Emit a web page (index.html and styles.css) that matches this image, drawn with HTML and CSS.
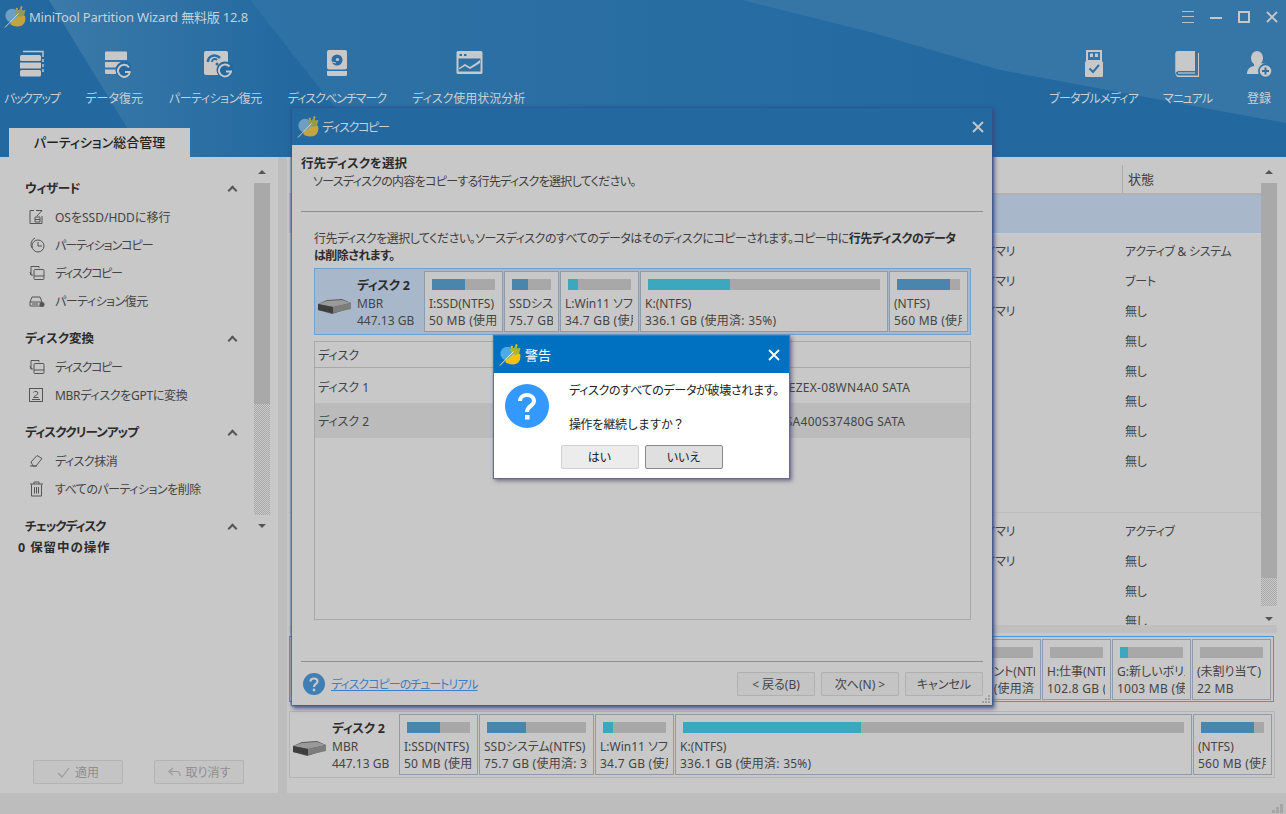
FILE: index.html
```html
<!DOCTYPE html>
<html lang="ja">
<head>
    <meta charset="utf-8">
    <title>MiniTool Partition Wizard</title>
    <link rel="stylesheet" href="styles.css">
</head>
<body>
<svg class="defs" width="0" height="0">
    <symbol id="logo" viewBox="0 0 24 24">
        <circle cx="9" cy="10.500" r="7.500" fill="var(--globe)"/>
        <path d="M7 18C11 15 15 13 17 8L23 11C24 15 23 19 20 21C16 23 11 23 7 20Z" fill="var(--gold)"/>
        <path d="M12 7L13.500 2L16 5L19 .5L20 5L23.500 4L22 10L18 12L14 10Z" fill="var(--leaf)"/>
        <circle cx="14" cy="3" r="1.200" fill="var(--gold)"/>
        <circle cx="19" cy="1.500" r="1.200" fill="var(--gold)"/>
        <path d="M1 23.500L16 8" stroke="var(--wand)" stroke-width="1" fill="none"/>
    </symbol>
    <symbol id="hdd" viewBox="0 0 33 15">
        <path d="M0 5 L9 1 L24 0 L33 4 L33 9 L14 15 L0 11 Z" fill="#5a5a5a"/>
        <path d="M0 5 L9 2 L24 1 L33 4 L15 8 Z" fill="#9a9a9a"/>
        <path d="M15 8 L33 4 L33 10 L15 14 Z" fill="#7d7d7d"/>
        <path d="M0 5 L15 8 L15 14 L0 11 Z" fill="#3e3e3e"/>
        <rect x="25" y="9" width="2" height="1.5" fill="#4f9a5a"/>
    </symbol>
    <symbol id="disk-copy" viewBox="0 0 16 16">
        <path d="M10 3 V1.5 H2 V10 H4 M2 10 L1 7" fill="none" stroke="currentColor"/>
        <rect x="5" y="4.5" width="10" height="10" rx="1" fill="none" stroke="currentColor"/>
        <path d="M5 11 H15" stroke="currentColor"/>
    </symbol>
</svg>

<div class="app">
    <header class="top">
        <svg class="bands" width="1286" height="157">
            <defs>
                <linearGradient id="shine" gradientUnits="userSpaceOnUse" x1="50" y1="0" x2="290" y2="0">
                    <stop offset="0" stop-color="#3b7aa9"/>
                    <stop offset="1" stop-color="#2369a0"/>
                </linearGradient>
                <linearGradient id="shine2" gradientUnits="userSpaceOnUse" x1="250" y1="0" x2="1000" y2="0">
                    <stop offset="0" stop-color="#2f72a5"/>
                    <stop offset="1" stop-color="#2369a0"/>
                </linearGradient>
            </defs>
            <polygon points="49,0 250,0 345,120 340,157 145,157" fill="url(#shine)"/>
            <polygon points="250,0 1000,0 1000,120 345,120" fill="url(#shine2)"/>
            <polygon points="742,0 1286,0 1286,123 1000,70 870,32" fill="#3676a7"/>
        </svg>
        <div class="title-row">
            <svg class="logo"><use href="#logo"/></svg>
            <span class="app-name">MiniTool Partition Wizard 無料版 12.8</span>
            <div class="win-btns">
                <svg width="12" height="12" viewBox="0 0 12 12"><path d="M0 .5H12M0 5.5H12M0 11.5H12" stroke="#b9c3cc"/></svg>
                <svg width="12" height="12" viewBox="0 0 12 12"><path d="M0 7H12" stroke="#c8c8c8" stroke-width="2"/></svg>
                <svg width="12" height="12" viewBox="0 0 12 12"><rect x="1" y="1" width="10" height="10" fill="none" stroke="#c8c8c8" stroke-width="2"/></svg>
                <svg width="12" height="12" viewBox="0 0 12 12"><path d="M1 1L11 11M11 1L1 11" stroke="#c8c8c8" stroke-width="1.800"/></svg>
            </div>
        </div>
        <div class="tools">
            <div class="tool-group">
                <div class="tool">
                    <svg width="29" height="28" viewBox="-2 0 29 28">
                        <rect x="1" y="5" width="21" height="6" rx="1.500" fill="#c8c8c8"/>
                        <rect x="1" y="12.500" width="21" height="6" rx=".5" fill="#c8c8c8"/>
                        <rect x="1" y="20" width="21" height="6.500" rx="1.500" fill="#c8c8c8"/>
                        <path d="M4 1.500H24V7M24 9V12M24 14V17M24 19V22" fill="none" stroke="#c8c8c8" stroke-width="1.400"/>
                    </svg>
                    <span class="sq13">バックアップ</span>
                </div>
                <div class="tool">
                    <svg width="33" height="28" viewBox="-6 0 33 28">
                        <path d="M2 1.500H22a1 1 0 0 1 1 1V10H1V2.500a1 1 0 0 1 1-1z" fill="#c8c8c8"/>
                        <rect x="1" y="12" width="22" height="5.500" fill="#c8c8c8"/>
                        <path d="M1 19.500H12V24H2a1 1 0 0 1-1-1z" fill="#c8c8c8"/>
                        <circle cx="20" cy="20" r="8.500" fill="#2369a0"/>
                        <path d="M25 17.500A6 6 0 1 0 26 21.500M21 22H26.500" fill="none" stroke="#c8c8c8" stroke-width="2"/>
                    </svg>
                    <span>データ復元</span>
                </div>
                <div class="tool">
                    <svg width="35" height="28" viewBox="-5 0 35 28">
                        <rect x="1" y="1" width="24" height="24" rx="2" fill="#c8c8c8"/>
                        <path d="M5 12C5 6 12 3 17 8" fill="none" stroke="#2b6da3" stroke-width="2.500"/>
                        <path d="M9 12C9 9 12 8 14 10" fill="none" stroke="#2b6da3" stroke-width="2"/>
                        <circle cx="14" cy="14" r="1.500" fill="#2b6da3"/>
                        <circle cx="22" cy="20" r="8.500" fill="#2369a0"/>
                        <path d="M26.500 16.500A6 6 0 1 0 28 21M23 21.500H29" fill="none" stroke="#c8c8c8" stroke-width="2"/>
                    </svg>
                    <span class="sq05">パーティション復元</span>
                </div>
                <div class="tool">
                    <svg width="22" height="28" viewBox="0 0 22 28">
                        <rect x="1" y="0" width="20" height="19.500" rx="2" fill="#c8c8c8"/>
                        <path d="M1 21H21V24.500a1.500 1.500 0 0 1-1.500 1.500H2.500A1.500 1.500 0 0 1 1 24.500z" fill="#c8c8c8"/>
                        <circle cx="11" cy="10" r="5.500" fill="#2b6da3"/>
                        <circle cx="11.500" cy="9.500" r="1.600" fill="#c8c8c8"/>
                        <path d="M6 12L10 13" stroke="#c8c8c8"/>
                    </svg>
                    <span class="sq1">ディスクベンチマーク</span>
                </div>
                <div class="tool">
                    <svg width="30" height="28" viewBox="-2 0 30 28">
                        <rect x="0.500" y="1" width="26" height="23" rx="1.500" fill="#c8c8c8"/>
                        <rect x="2.500" y="8.500" width="22" height="13" fill="#2d70a4"/>
                        <path d="M3 21V18L9 14L14 17L20 13L24 10V21Z" fill="#c8c8c8"/>
                        <path d="M3 19.500L9 16L14 19L20 15.500L24 13V21H3Z" fill="#2d70a4"/>
                        <rect x="3.500" y="4" width="2.500" height="2" fill="#2d70a4"/>
                        <rect x="8" y="4" width="2.500" height="2" fill="#2d70a4"/>
                    </svg>
                    <span>ディスク使用状況分析</span>
                </div>
            </div>
            <div class="tool-group tool-group-right">
                <div class="tool">
                    <svg width="20" height="28" viewBox="0 0 20 28">
                        <path d="M3 1H17V11H3z" fill="none" stroke="#c8c8c8" stroke-width="2"/>
                        <rect x="6" y="3.500" width="3" height="3.500" fill="#c8c8c8"/>
                        <rect x="11" y="3.500" width="3" height="3.500" fill="#c8c8c8"/>
                        <rect x="1" y="11" width="18" height="16" rx="1.500" fill="#c8c8c8"/>
                        <path d="M5.500 18.500L9 22L15 15" fill="none" stroke="#2f72a5" stroke-width="2"/>
                    </svg>
                    <span class="sq08">ブータブルメディア</span>
                </div>
                <div class="tool">
                    <svg width="24" height="28" viewBox="0 0 24 28">
                        <path d="M3 1H20V20H4C2 20 1 21.500 1 23C1 24.500 2 25.500 4 25.500H23V3H24V27H4C1.500 27 .5 25 .5 23V3.500C.5 2 1.500 1 3 1Z" fill="#c8c8c8"/>
                        <path d="M3 1H20V21H4C2 21 1 22 .5 23V3.500C.5 2 1.500 1 3 1Z" fill="#c8c8c8"/>
                        <path d="M3 23H20" stroke="#c8c8c8" stroke-width="1.200"/>
                    </svg>
                    <span class="sq1">マニュアル</span>
                </div>
                <div class="tool tool-last">
                    <svg width="26" height="28" viewBox="0 0 26 28">
                        <ellipse cx="11" cy="8" rx="6" ry="7" fill="#c8c8c8"/>
                        <path d="M8 13L8 16C3 17 1 20 1 24H14L20 14L14 13Z" fill="#c8c8c8"/>
                        <circle cx="19.500" cy="21" r="7.500" fill="#3575a6"/>
                        <circle cx="19.500" cy="21" r="5.800" fill="#c8c8c8"/>
                        <path d="M19.500 17.500V24.500M16 21H23" stroke="#2f72a5" stroke-width="2"/>
                    </svg>
                    <span>登録</span>
                </div>
            </div>
        </div>
        <div class="tab">パーティション総合管理</div>
    </header>

    <main class="main">
        <aside class="side">
            <div class="side-top">
                <nav class="nav">
                    <section class="group">
                        <h3 class="group-title"><span class="sq05">ウィザード</span><span class="chev"></span></h3>
                        <div class="item">
                            <svg width="14" height="14" viewBox="0 0 14 14"><path d="M5 .5H1V13.500H13V6M7 .5H13M13 .5L8 6" fill="none" stroke="currentColor"/><path d="M6 7H11V12H6zM6 9.500H11" fill="none" stroke="currentColor"/></svg>
                            <span>OSをSSD/HDDに移行</span>
                        </div>
                        <div class="item">
                            <svg width="16" height="16" viewBox="0 0 16 16"><circle cx="9" cy="9" r="6" fill="none" stroke="currentColor"/><path d="M9 5V9H13" fill="none" stroke="currentColor"/><path d="M3 11A7 7 0 0 1 6 1" fill="none" stroke="currentColor"/></svg>
                            <span class="sq1">パーティションコピー</span>
                        </div>
                        <div class="item">
                            <svg width="16" height="16"><use href="#disk-copy"/></svg>
                            <span class="sq13">ディスクコピー</span>
                        </div>
                        <div class="item">
                            <svg width="16" height="14" viewBox="0 0 16 14"><path d="M1 8L3 3H11L13 8M1 8H13V12H1Z" fill="none" stroke="currentColor"/><path d="M3 10H9" stroke="currentColor"/><circle cx="13" cy="10.500" r="2.500" fill="currentColor"/></svg>
                            <span class="sq05">パーティション復元</span>
                        </div>
                    </section>
                    <section class="group">
                        <h3 class="group-title"><span>ディスク変換</span><span class="chev"></span></h3>
                        <div class="item">
                            <svg width="16" height="16"><use href="#disk-copy"/></svg>
                            <span class="sq13">ディスクコピー</span>
                        </div>
                        <div class="item">
                            <svg width="14" height="14" viewBox="0 0 14 14"><rect x=".5" y=".5" width="13" height="13" fill="none" stroke="currentColor"/><path d="M4.500 4.500C5 3 9 3 9 5C9 7 5 8 4.500 9.500H9.500M3 11.500H11" fill="none" stroke="currentColor"/></svg>
                            <span class="sq03">MBRディスクをGPTに変換</span>
                        </div>
                    </section>
                    <section class="group">
                        <h3 class="group-title"><span class="sq08">ディスククリーンアップ</span><span class="chev"></span></h3>
                        <div class="item">
                            <svg width="15" height="14" viewBox="0 0 15 14"><path d="M1 12H8M2 8L8 1.500L13 4.500L7 12H4Z" fill="none" stroke="currentColor"/></svg>
                            <span class="sq05">ディスク抹消</span>
                        </div>
                        <div class="item">
                            <svg width="15" height="16" viewBox="0 0 15 16"><path d="M1 3H14M5 3V1H10V3M2.500 3.500V15H12.500V3.500M5.500 6V12.500M7.500 6V12.500M9.500 6V12.500" fill="none" stroke="currentColor"/></svg>
                            <span class="sq05">すべてのパーティションを削除</span>
                        </div>
                    </section>
                    <section class="group">
                        <h3 class="group-title"><span class="sq1">チェックディスク</span><span class="chev"></span></h3>
                    </section>
                    <div class="pending">0 保留中の操作</div>
                </nav>
                <div class="vscroll vscroll-side">
                    <span class="arrow-up"></span>
                    <div class="thumb"></div>
                    <div class="dither"></div>
                    <span class="arrow-down"></span>
                </div>
            </div>
            <div class="actions">
                <button class="act-btn"><svg width="13" height="11" viewBox="0 0 13 11"><path d="M1 6L5 10L12 1" fill="none" stroke="#9b9b9b" stroke-width="1.200"/></svg>適用</button>
                <button class="act-btn"><svg width="13" height="11" viewBox="0 0 13 11"><path d="M5 1L1 4.500L5 8M1 4.500H9C11 4.500 12 6 12 9" fill="none" stroke="#9b9b9b" stroke-width="1.200"/></svg>取り消す</button>
            </div>
        </aside>

        <section class="content">
            <div class="table-wrap">
                <div class="parts-table">
                    <div class="head-row"><span class="head-status">状態</span></div>
                    <div class="sel-row"></div>
                    <div class="prow"><span>プライマリ</span><span>アクティブ &amp; システム</span></div>
                    <div class="prow"><span>プライマリ</span><span>ブート</span></div>
                    <div class="prow"><span>プライマリ</span><span>無し</span></div>
                    <div class="prow"><span></span><span>無し</span></div>
                    <div class="prow"><span></span><span>無し</span></div>
                    <div class="prow"><span></span><span>無し</span></div>
                    <div class="prow"><span></span><span>無し</span></div>
                    <div class="prow"><span></span><span>無し</span></div>
                    <div class="disk-gap"></div>
                    <div class="prow"><span>プライマリ</span><span>アクティブ</span></div>
                    <div class="prow"><span>プライマリ</span><span>無し</span></div>
                    <div class="prow"><span></span><span>無し</span></div>
                    <div class="prow"><span></span><span>無し</span></div>
                </div>
                <div class="vscroll vscroll-table">
                    <span class="arrow-up"></span>
                    <div class="thumb"></div>
                    <div class="dither"></div>
                    <span class="arrow-down"></span>
                </div>
            </div>
            <div class="hscroll"></div>

            <div class="disk disk-selected">
                <div class="parts">
                    <div class="part part-e">
                        <div class="bar"></div>
                        <div class="part-text"><div>E:新規マウント(NTFS)</div><div>465.8 GB (使用済: 0%)</div></div>
                    </div>
                    <div class="part part-h">
                        <div class="bar"></div>
                        <div class="part-text"><div>H:仕事(NTFS)</div><div>102.8 GB (使用済: 0%)</div></div>
                    </div>
                    <div class="part part-g">
                        <div class="bar"><i class="teal" style="width:12%"></i></div>
                        <div class="part-text"><div>G:新しいボリューム</div><div>1003 MB (使用済: 12%)</div></div>
                    </div>
                    <div class="part part-g">
                        <div class="bar"></div>
                        <div class="part-text"><div>(未割り当て)</div><div>22 MB</div></div>
                    </div>
                </div>
            </div>

            <div class="disk disk-lower">
                <svg class="hdd" width="33" height="15"><use href="#hdd"/></svg>
                <div class="disk-info">
                    <b>ディスク 2</b>
                    <div>MBR</div>
                    <div>447.13 GB</div>
                </div>
                <div class="parts">
                    <div class="part w79">
                        <div class="bar"><i style="width:52%"></i></div>
                        <div class="part-text"><div>I:SSD(NTFS)</div><div>50 MB (使用済: 52%)</div></div>
                    </div>
                    <div class="part w115">
                        <div class="bar"><i style="width:39%"></i></div>
                        <div class="part-text"><div>SSDシステム(NTFS)</div><div>75.7 GB (使用済: 39%)</div></div>
                    </div>
                    <div class="part w79">
                        <div class="bar"><i class="teal" style="width:16%"></i></div>
                        <div class="part-text"><div>L:Win11 ソフト(NTFS)</div><div>34.7 GB (使用済: 16%)</div></div>
                    </div>
                    <div class="part w517">
                        <div class="bar"><i class="teal" style="width:35.500%"></i></div>
                        <div class="part-text"><div>K:(NTFS)</div><div>336.1 GB (使用済: 35%)</div></div>
                    </div>
                    <div class="part w79">
                        <div class="bar"><i style="width:84%"></i></div>
                        <div class="part-text"><div>(NTFS)</div><div>560 MB (使用済: 84%)</div></div>
                    </div>
                </div>
            </div>
        </section>
    </main>

    <footer class="status">
        <svg width="11" height="9" viewBox="0 0 11 9"><path d="M8 0h3v3H8zM4 3h3v3H4zM8 3h3v3H8zM0 6h3v3H0zM4 6h3v3H4zM8 6h3v3H8z" fill="#a5a5a5"/></svg>
    </footer>

    <!-- main dialog -->
    <div class="dialog copy-dialog">
        <div class="dlg-title">
            <svg class="logo"><use href="#logo"/></svg>
            <span class="sq13">ディスクコピー</span>
            <svg class="dlg-x" width="12" height="12" viewBox="0 0 12 12"><path d="M1 1L11 11M11 1L1 11" stroke="#c8c8c8" stroke-width="1.800"/></svg>
        </div>
        <div class="dlg-body">
            <h4 class="dlg-heading">行先ディスクを選択</h4>
            <p class="dlg-sub">ソースディスクの内容をコピーする行先ディスクを選択してください。</p>
            <hr class="rule rule-top">
            <div class="dlg-inner">
                <p class="dlg-para">行先ディスクを選択してください。ソースディスクのすべてのデータはそのディスクにコピーされます。コピー中に<b>行先ディスクのデータ<br>は削除されます。</b></p>
                <div class="disk disk-target">
                    <svg class="hdd" width="33" height="15"><use href="#hdd"/></svg>
                    <div class="disk-info">
                        <b>ディスク 2</b>
                        <div>MBR</div>
                        <div>447.13 GB</div>
                    </div>
                    <div class="parts">
                        <div class="part w79">
                            <div class="bar"><i style="width:52%"></i></div>
                            <div class="part-text"><div>I:SSD(NTFS)</div><div>50 MB (使用済: 52%)</div></div>
                        </div>
                        <div class="part w55">
                            <div class="bar"><i style="width:41%"></i></div>
                            <div class="part-text"><div>SSDシステム(NTFS)</div><div>75.7 GB (使用済: 41%)</div></div>
                        </div>
                        <div class="part w79">
                            <div class="bar"><i class="teal" style="width:16%"></i></div>
                            <div class="part-text"><div>L:Win11 ソフト(NTFS)</div><div>34.7 GB (使用済: 16%)</div></div>
                        </div>
                        <div class="part w248">
                            <div class="bar"><i class="teal" style="width:35.500%"></i></div>
                            <div class="part-text"><div>K:(NTFS)</div><div>336.1 GB (使用済: 35%)</div></div>
                        </div>
                        <div class="part w79">
                            <div class="bar"><i style="width:84%"></i></div>
                            <div class="part-text"><div>(NTFS)</div><div>560 MB (使用済: 84%)</div></div>
                        </div>
                    </div>
                </div>
                <div class="disk-table">
                    <div class="dt-head">ディスク</div>
                    <div class="dt-row"><span>ディスク 1</span><span class="dt-model">WDC WD10EZEX-08WN4A0 SATA</span></div>
                    <div class="dt-row dt-row-sel"><span>ディスク 2</span><span class="dt-model">KINGSTON SA400S37480G SATA</span></div>
                </div>
            </div>
            <hr class="rule rule-bottom">
            <div class="dlg-foot">
                <svg width="22" height="22" viewBox="0 0 22 22"><circle cx="11" cy="11" r="11" fill="#3f7fb5"/><path d="M7.500 8.500C7.500 4.500 14.500 4.500 14.500 8.500C14.500 11 11 11 11 14" fill="none" stroke="#c8c8c8" stroke-width="2.200"/><circle cx="11" cy="17" r="1.400" fill="#c8c8c8"/></svg>
                <a class="help-link">ディスクコピーのチュートリアル</a>
                <div class="dlg-btns">
                    <button class="dlg-btn">&lt; 戻る(B)</button>
                    <button class="dlg-btn">次へ(N) &gt;</button>
                    <button class="dlg-btn">キャンセル</button>
                </div>
            </div>
        </div>
        <svg class="grip" width="9" height="9" viewBox="0 0 9 9"><path d="M6 0h2v2H6zM3 3h2v2H3zM6 3h2v2H6zM0 6h2v2H0zM3 6h2v2H3zM6 6h2v2H6z" fill="#a0a0a0"/></svg>
    </div>

    <!-- warning on top of it -->
    <div class="dialog alert">
        <div class="alert-title">
            <svg class="logo logo-bright"><use href="#logo"/></svg>
            <span>警告</span>
            <svg class="dlg-x" width="12" height="12" viewBox="0 0 12 12"><path d="M1 1L11 11M11 1L1 11" stroke="#fff" stroke-width="1.800"/></svg>
        </div>
        <div class="alert-body">
            <svg class="alert-q" width="44" height="44" viewBox="0 0 44 44"><circle cx="22" cy="22" r="22" fill="#3399ff"/><path d="M15 17C15 9 29 9 29 17C29 22 22 22 22 28" fill="none" stroke="#fff" stroke-width="4"/><rect x="20" y="31" width="4.500" height="4.500" fill="#fff"/></svg>
            <div class="alert-msg">
                <p>ディスクのすべてのデータが破壊されます。</p>
                <p class="alert-ask">操作を継続しますか？</p>
            </div>
        </div>
        <div class="alert-btns">
            <button class="alert-btn">はい</button>
            <button class="alert-btn alert-btn-focus">いいえ</button>
        </div>
    </div>
</div>
</body>
</html>
```

FILE: styles.css
```css
* {
    box-sizing: border-box;
}
html, body {
    margin: 0;
    height: 100%;
    overflow: hidden;
}
body {
    font-family: "Noto Sans", "Noto Sans CJK JP", sans-serif;
    font-size: 12px;
    font-feature-settings: "palt";
    color: #3e3e3e;
    background: #c8c8c8;
}
p, h3, h4 {
    margin: 0;
}
.defs {
    position: absolute;
}
.sq03 { letter-spacing: -0.3px; }
.sq05 { letter-spacing: -0.5px; }
.sq08 { letter-spacing: -0.8px; }
.sq1 { letter-spacing: -1px; }
.sq13 { letter-spacing: -1.3px; }

.app {
    position: relative;
    width: 1286px;
    height: 814px;
    display: flex;
    flex-direction: column;
    overflow: hidden;
    --gold: #c4a440;
    --globe: #6c9fc2;
    --wand: #dcd8c6;
    --leaf: #8f9c52;
}

/* top blue area */
.top {
    position: relative;
    height: 157px;
    flex: none;
    background: #2369a0;
    color: #c8d0d6;
}
.bands {
    position: absolute;
    left: 0;
    top: 0;
}
.title-row {
    position: relative;
    display: flex;
    align-items: center;
    height: 33px;
    padding-left: 4px;
}
.logo {
    width: 22px;
    height: 22px;
    flex: none;
}
.logo-bright {
    --gold: #f2c40f;
    --globe: #49ace8;
    --wand: #fff6d0;
    --leaf: #a5b63c;
}
.app-name {
    margin-left: 3px;
    font-size: 13px;
    letter-spacing: -0.17px;
}
.win-btns {
    display: flex;
    gap: 16px;
    margin-left: auto;
    padding-right: 8px;
}
.tools {
    position: relative;
    display: flex;
    justify-content: space-between;
    margin-top: 17px;
    padding-left: 4px;
    padding-right: 14px;
}
.tool-group {
    display: flex;
    gap: 26px;
}
.tool-group-right {
    gap: 25px;
}
.tool {
    display: flex;
    flex-direction: column;
    align-items: center;
}
.tool-last {
    margin-left: 9px;
}
.tool span {
    margin-top: 12px;
    line-height: 18px;
    white-space: nowrap;
}
.tab {
    position: absolute;
    left: 9px;
    bottom: 0;
    width: 181px;
    height: 29px;
    background: #c8c8c8;
    color: #222;
    font-weight: 500;
    font-size: 13px;
    line-height: 29px;
    text-align: center;
}

/* main area */
.main {
    flex: 1;
    display: flex;
    min-height: 0;
}
.side {
    width: 287px;
    flex: none;
    display: flex;
    flex-direction: column;
    background: #c8c8c8;
    border-right: 9px solid #bdbdbd;
}
.side-top {
    display: flex;
    height: 375px;
}
.nav {
    width: 254px;
    flex: none;
    padding-top: 17px;
}
.group {
    margin-bottom: 10px;
}
.group:last-of-type {
    margin-bottom: 0;
}
.group-title {
    display: flex;
    align-items: center;
    justify-content: space-between;
    height: 28px;
    padding: 0 22px 2px 25px;
    font-size: 12.500px;
    font-weight: 700;
    color: #2c2c2c;
}
.chev {
    width: 0;
    height: 0;
}
.chev::before {
    content: "";
    display: block;
    width: 5px;
    height: 5px;
    margin-left: -3px;
    border-left: 2px solid #555;
    border-top: 2px solid #555;
    transform: rotate(45deg);
}
.item {
    display: grid;
    grid-template-columns: 26px 1fr;
    align-items: center;
    height: 28px;
    padding: 1px 0 0 29px;
    color: #555;
}
.item span {
    color: #444;
    white-space: nowrap;
}
.pending {
    height: 15px;
    padding: 1px 0 0 18px;
    line-height: 14px;
    font-size: 12.500px;
    font-weight: 700;
    letter-spacing: 0.9px;
    color: #2c2c2c;
}
.vscroll {
    position: relative;
    width: 16px;
    flex: none;
    display: flex;
    flex-direction: column;
    padding-top: 26px;
}
.vscroll-side {
    height: 375px;
}
.vscroll-side .thumb {
    height: 221px;
    flex: none;
}
.vscroll-side .dither {
    height: 111px;
    flex: none;
}
.thumb {
    background: #a9a9a9;
}
.dither {
    background: repeating-conic-gradient(#a6a6a6 0 25%, #cbcbcb 0 50%) 0 0 / 2px 2px;
}
.arrow-up, .arrow-down {
    position: absolute;
    left: 4px;
    width: 0;
    height: 0;
    border-left: 4px solid transparent;
    border-right: 4px solid transparent;
}
.arrow-up {
    top: 13px;
    border-bottom: 4px solid #555;
}
.arrow-down {
    bottom: 4px;
    border-top: 4px solid #555;
}
.actions {
    display: flex;
    gap: 31px;
    margin-top: auto;
    padding: 0 0 9px 33px;
}
.act-btn {
    display: flex;
    align-items: center;
    justify-content: center;
    gap: 5px;
    width: 90px;
    height: 24px;
    padding: 0;
    background: #c4c4c4;
    border: 1px solid #b3b3b3;
    border-radius: 2px;
    font: inherit;
    color: #8e8e8e;
}

/* right side */
.content {
    flex: 1;
    min-width: 0;
    padding-left: 2px;
    padding-top: 8px;
    padding-right: 9px;
}
.table-wrap {
    display: flex;
    height: 460px;
    overflow: hidden;
}
.parts-table {
    width: 972px;
    flex: none;
}
.head-row {
    display: flex;
    justify-content: flex-end;
    height: 30px;
    border-bottom: 2px solid #b2b2b2;
}
.head-status {
    width: 139px;
    height: 28px;
    padding-left: 5px;
    border-left: 1px solid #ababab;
    font-size: 13px;
    line-height: 28px;
}
.sel-row {
    height: 39px;
    background: #a8b8ca;
    border-bottom: 1px solid #c2d0de;
}
.prow {
    display: grid;
    grid-template-columns: 675px 158px 1fr;
    height: 30px;
    align-items: center;
    color: #444;
    letter-spacing: -0.3px;
}
.prow::before {
    content: "";
}
.prow span:last-child {
    padding-left: 3px;
}
.prow:nth-child(3) {
    margin-top: 2px;
}
.disk-gap {
    height: 37px;
    border-bottom: 1px solid #bdbdbd;
    margin-bottom: 3px;
}
.vscroll-table {
    padding-top: 18px;
    height: 460px;
}
.vscroll-table .thumb {
    height: 395px;
    flex: none;
}
.vscroll-table .dither {
    height: 28px;
    flex: none;
}
.vscroll-table .arrow-up {
    top: 5px;
}
.hscroll {
    height: 8px;
    background: #bfbfbf;
}
.disk {
    display: flex;
    align-items: stretch;
}
.disk-selected {
    height: 66px;
    margin: 3px 3px 0 0;
    justify-content: flex-end;
    padding: 2px;
    border: 1px solid #4d94dc;
}
.disk-lower {
    position: relative;
    height: 67px;
    margin: 9px 2px 0 0;
    padding: 2px 2px 2px 0;
    border: 1px solid #b5b5b5;
}
.hdd {
    position: absolute;
    left: 3px;
    top: 29px;
}
.disk-info {
    width: 109px;
    padding-left: 42px;
    padding-top: 6px;
    line-height: 17.500px;
    color: #444;
    white-space: nowrap;
}
.disk-info b {
    display: block;
    color: #2c2c2c;
    font-size: 12.500px;
    letter-spacing: -0.3px;
}
.parts {
    display: flex;
    gap: 1px;
}
.part {
    height: 61px;
    border: 1px solid #8c9cae;
    background: #c8c8c8;
    overflow: hidden;
}
.w55 { width: 55px; }
.w79 { width: 79px; }
.w115 { width: 115px; }
.w248 { width: 248px; }
.w517 { width: 517px; }
.part-e { width: 108px; }
.part-h { width: 69px; }
.part-g { width: 79px; }
.bar {
    height: 11px;
    margin: 7px 7px 0;
    background: #a8a8a8;
    display: flex;
}
.bar i {
    display: block;
    background: #4a85ad;
}
.bar i.teal {
    background: #3ba8bf;
}
.part-text {
    margin: 5px 5px 0 4px;
    line-height: 17px;
    white-space: nowrap;
    overflow: hidden;
    color: #444;
}
.part-text div + div {
    letter-spacing: 0.25px;
}

/* dialogs */
.dialog {
    position: absolute;
    display: flex;
    flex-direction: column;
}
.copy-dialog {
    left: 292px;
    top: 108px;
    width: 700px;
    height: 597px;
    background: #c8c8c8;
    box-shadow: 0 0 2px 1px #2d5290, 2px 3px 4px 1px rgba(70, 70, 120, 0.7);
}
.dlg-title {
    display: flex;
    align-items: center;
    height: 37px;
    flex: none;
    padding: 0 8px 0 5px;
    background: #2369a0;
    color: #c8d0d6;
}
.dlg-title .logo {
    margin-right: 3px;
}
.dlg-x {
    margin-left: auto;
}
.dlg-body {
    flex: 1;
    display: flex;
    flex-direction: column;
    padding: 10px 9px 0;
}
.dlg-heading {
    font-size: 12.500px;
    font-weight: 700;
    line-height: 18px;
    color: #2c2c2c;
}
.dlg-sub {
    margin-left: 12px;
    line-height: 18px;
    letter-spacing: -0.7px;
    white-space: nowrap;
}
.rule {
    width: 100%;
    height: 1px;
    margin: 0;
    border: 0;
    background: #8f8f8f;
}
.rule-top {
    margin-top: 20px;
}
.dlg-inner {
    padding: 0 12px 0 13px;
    height: 449px;
}
.dlg-para {
    margin-top: 18px;
    line-height: 17px;
    letter-spacing: -0.5px;
    white-space: nowrap;
}
.dlg-para b {
    color: #2c2c2c;
}
.disk-target {
    position: relative;
    height: 67px;
    margin-top: 4px;
    padding: 2px;
    background: #a8b8ca;
    border: 1px solid #6ea2d0;
}
.disk-target .hdd {
    top: 30px;
}
.disk-target .disk-info {
    width: 107px;
    padding-left: 40px;
}
.disk-table {
    height: 279px;
    margin-top: 6px;
    border: 1px solid #a8a8a8;
}
.dt-head {
    height: 26px;
    padding-left: 3px;
    line-height: 27px;
    border-bottom: 1px solid #a8a8a8;
}
.dt-row {
    display: grid;
    grid-template-columns: 404px 1fr;
    height: 35px;
    padding: 3px 0 0 3px;
    align-items: center;
    color: #444;
}
.dt-model {
    letter-spacing: 0.3px;
    white-space: nowrap;
}
.dt-row-sel {
    padding-top: 1px;
    background: #bbbbbb;
}
.dt-row-sel .dt-model {
    margin-left: -3px;
}
.rule-bottom {
    flex: none;
}
.dlg-foot {
    display: flex;
    align-items: center;
    height: 43px;
    padding: 0 0 0 2px;
}
.help-link {
    margin-left: 6px;
    color: #3f7fbd;
    text-decoration: underline;
    letter-spacing: -1px;
}
.dlg-btns {
    display: flex;
    gap: 6px;
    margin-left: auto;
    margin-top: 1px;
}
.dlg-btn {
    width: 78px;
    height: 24px;
    padding: 0;
    background: #c4c4c4;
    border: 1px solid #b0b0b0;
    border-radius: 2px;
    font: inherit;
    color: #444;
}
.grip {
    position: absolute;
    right: 1px;
    bottom: 1px;
}
.alert {
    left: 494px;
    top: 336px;
    width: 295px;
    height: 142px;
    background: #fff;
    box-shadow: 0 0 1px 1px #6a6a8a, 2px 2px 4px 1px rgba(60, 60, 100, 0.6);
}
.alert-title {
    display: flex;
    align-items: center;
    height: 37px;
    flex: none;
    padding: 0 9px 0 5px;
    background: #0070c0;
    color: #fff;
    font-size: 13px;
}
.alert-title .logo {
    margin-right: 4px;
}
.alert-body {
    display: flex;
    height: 72px;
    color: #222;
}
.alert-q {
    margin: 11px 0 0 11px;
}
.alert-msg {
    margin-left: 20px;
    padding-top: 9px;
    line-height: 17px;
    white-space: nowrap;
    letter-spacing: -0.3px;
}
.alert-msg p + p {
    margin-top: 17px;
}
.alert-ask {
    font-feature-settings: normal;
    letter-spacing: -0.5px;
}
.alert-btns {
    display: flex;
    justify-content: center;
    gap: 6px;
}
.alert-btn {
    width: 78px;
    height: 24px;
    padding: 0;
    background: #ececec;
    border: 1px solid #d0d0d0;
    border-radius: 2px;
    font: inherit;
    color: #222;
}
.alert-btn-focus {
    background: #dfdfdf;
    border-color: #8a8a8a;
}

/* bottom line */
.status {
    display: flex;
    align-items: flex-end;
    justify-content: flex-end;
    height: 21px;
    flex: none;
    padding: 0 3px 1px 0;
    background: #bdbdbd;
}
```
